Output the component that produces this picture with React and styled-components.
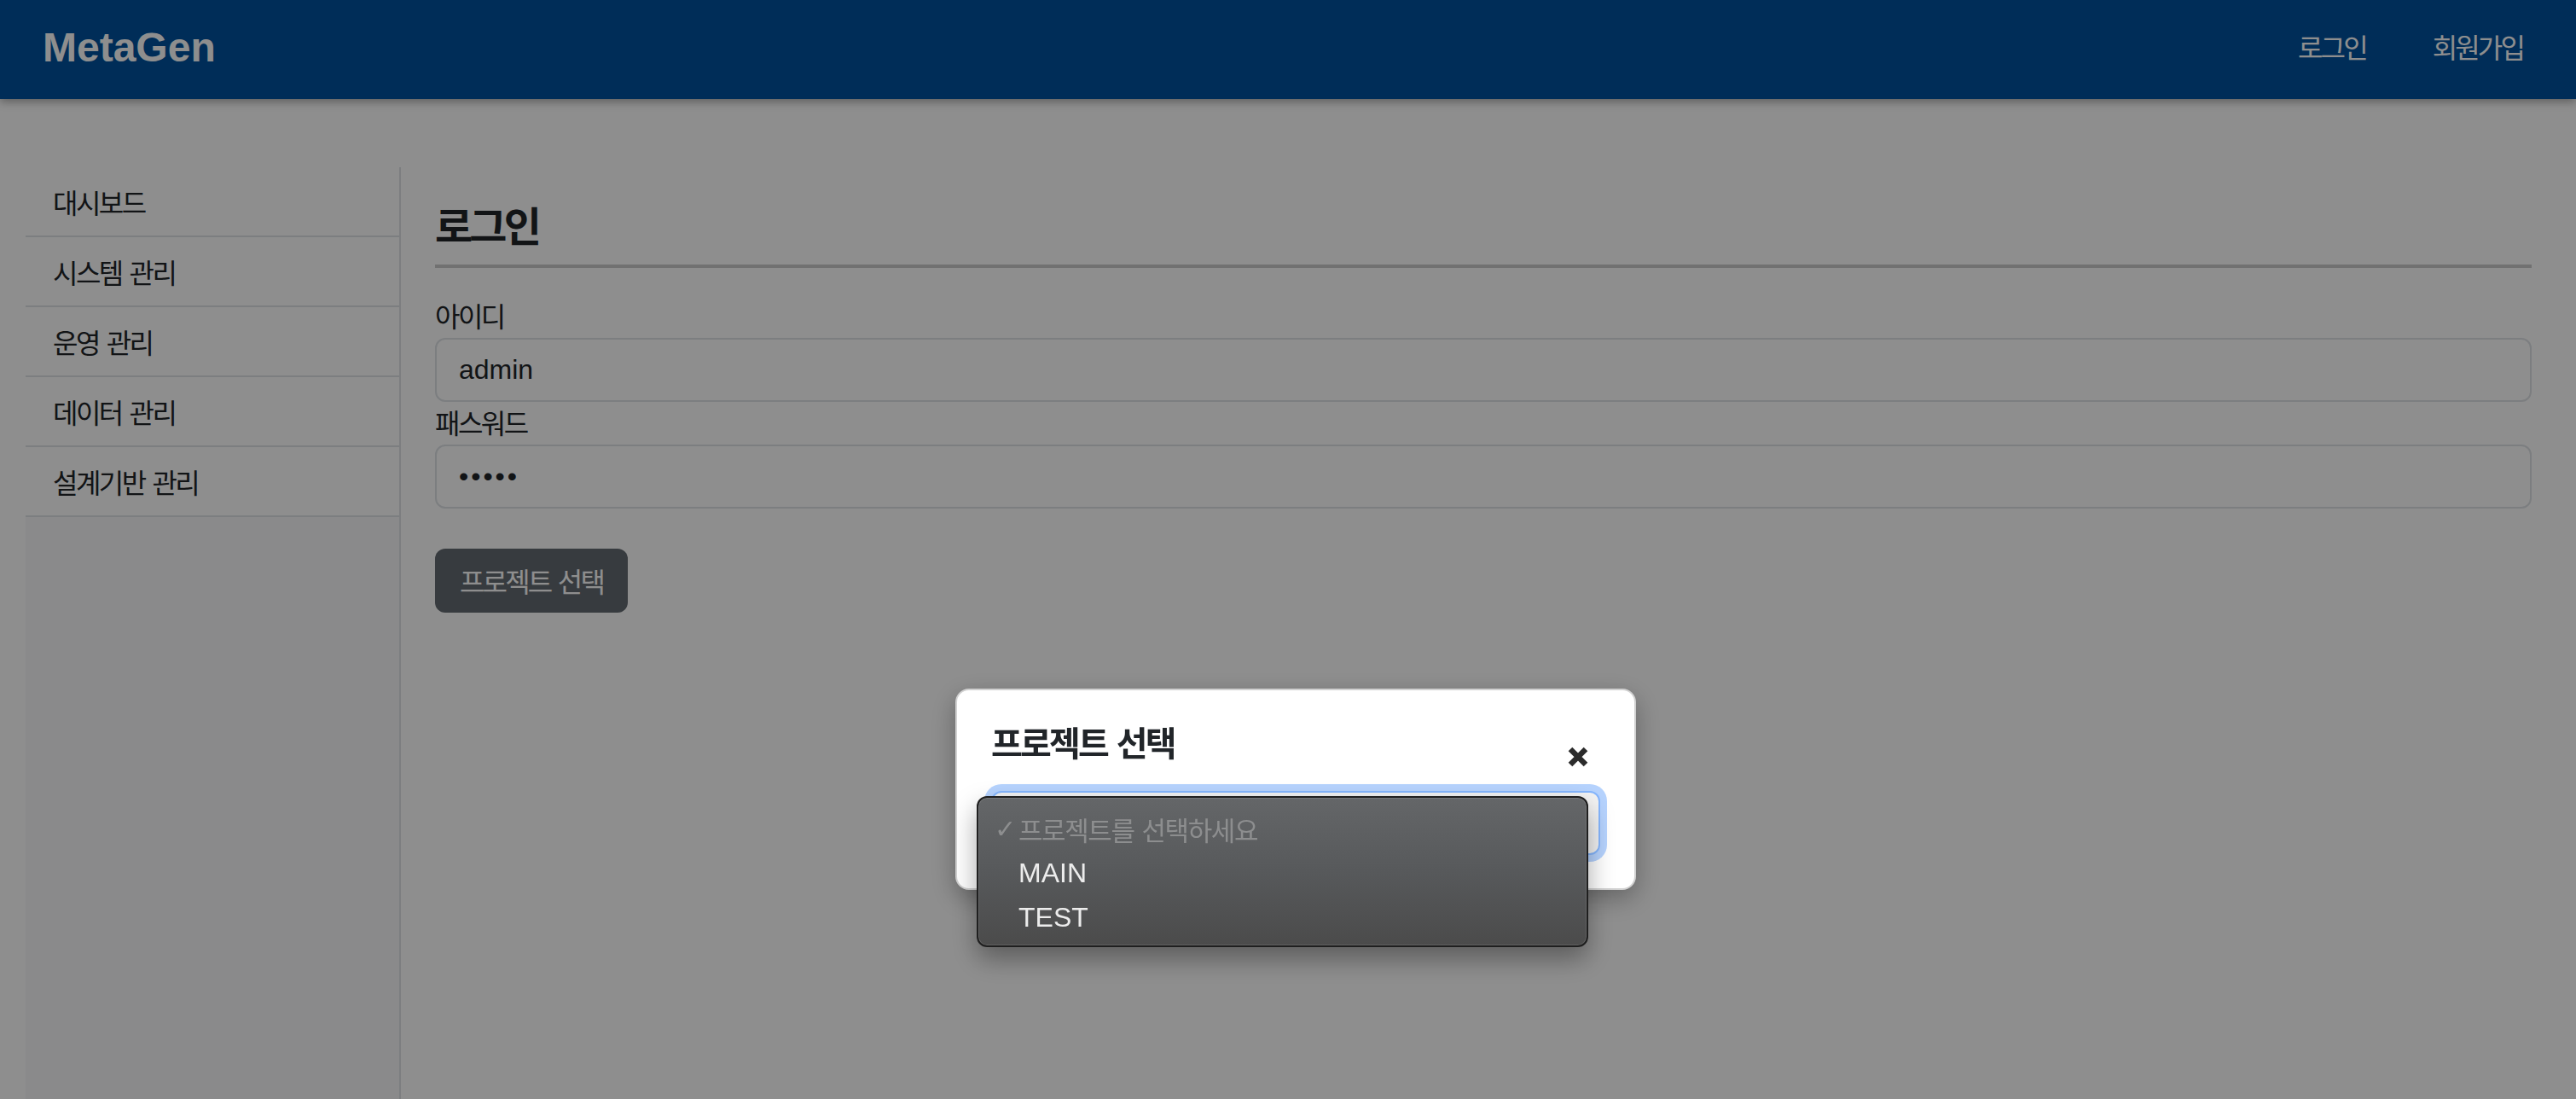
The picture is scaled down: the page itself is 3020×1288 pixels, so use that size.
import React from "react";
import styled, { createGlobalStyle } from "styled-components";

const GlobalStyle = createGlobalStyle`
	* {
		box-sizing: border-box;
	}
	html,
	body {
		margin: 0;
		padding: 0;
		background: #ffffff;
	}
	body {
		font-family: "Liberation Sans", "Noto Sans CJK KR", sans-serif;
		color: #212529;
	}
`;

const menuItems = ["대시보드", "시스템 관리", "운영 관리", "데이터 관리", "설계기반 관리"];
const projects = ["MAIN", "TEST"];

export default function App() {
	return (
		<>
			<GlobalStyle />
			<Page>
				<Navbar>
					<Brand>MetaGen</Brand>
					<NavLinks>
						<NavLink>로그인</NavLink>
						<NavLink>회원가입</NavLink>
					</NavLinks>
				</Navbar>
				<Body>
					<Sidebar>
						{menuItems.map((item) => (
							<SideItem key={item}>{item}</SideItem>
						))}
					</Sidebar>
					<Content>
						<Heading>로그인</Heading>
						<Field>
							<Label>아이디</Label>
							<Input type="text" value="admin" readOnly />
						</Field>
						<Field>
							<Label>패스워드</Label>
							<Input type="password" value="admin" readOnly />
						</Field>
						<DarkButton>프로젝트 선택</DarkButton>
					</Content>
				</Body>
			</Page>

			<Backdrop>
				<Modal>
					<ModalHeader>
						<ModalTitle>프로젝트 선택</ModalTitle>
						<CloseButton title="닫기">
							<svg width="24" height="24" viewBox="0 0 24 24">
								<path
									d="M3 3 L21 21 M21 3 L3 21"
									stroke="#2b2b2b"
									strokeWidth="6.5"
									strokeLinecap="butt"
								/>
							</svg>
						</CloseButton>
					</ModalHeader>
					<SelectBox>
						<Listbox>
							<OptionRow $disabled>
								<Check>✓</Check>
								<OptionText $korean>프로젝트를 선택하세요</OptionText>
							</OptionRow>
							{projects.map((p) => (
								<OptionRow key={p}>
									<Check />
									<OptionText>{p}</OptionText>
								</OptionRow>
							))}
						</Listbox>
					</SelectBox>
				</Modal>
			</Backdrop>
		</>
	);
}

const Page = styled.div`
	min-height: 100vh;
	display: flex;
	flex-direction: column;
`;

const Navbar = styled.header`
	height: 116px;
	background-color: #00529f;
	display: flex;
	align-items: center;
	justify-content: space-between;
	padding: 0 62px 0 50px;
	box-shadow: 0 3px 10px rgba(0, 0, 0, 0.35);
	position: relative;
	z-index: 1;
`;

const Brand = styled.div`
	color: #ffffff;
	font-family: "Liberation Sans", sans-serif;
	font-weight: 700;
	font-size: 48px;
	margin-top: -6px;
`;

const NavLinks = styled.nav`
	display: flex;
	gap: 78px;
	margin-top: -8px;
`;

const NavLink = styled.a`
	color: #ffffff;
	font-size: 32px;
	letter-spacing: -0.09em;
	cursor: pointer;
`;

const Body = styled.main`
	flex: 1;
	display: flex;
	gap: 40px;
	padding: 80px 52px 0 30px;
`;

const Sidebar = styled.aside`
	width: 440px;
	flex-shrink: 0;
	background-color: #f8f8f9;
	border-right: 2px solid #dee2e6;
	display: flex;
	flex-direction: column;
`;

const SideItem = styled.div`
	height: 82px;
	display: flex;
	align-items: center;
	padding-left: 32px;
	background: #ffffff;
	border-bottom: 2px solid #dee2e6;
	font-size: 32px;
	letter-spacing: -0.08em;
	word-spacing: 0.08em;
	color: #212529;
`;

const Content = styled.section`
	flex: 1;
	padding-top: 42px;
	display: flex;
	flex-direction: column;
	align-items: flex-start;
`;

const Heading = styled.h2`
	align-self: stretch;
	margin: 0 0 34px;
	padding-bottom: 14px;
	font-size: 48px;
	font-weight: 700;
	letter-spacing: -0.08em;
	line-height: 1.2;
	border-bottom: 4px solid #cccccc;
`;

const Field = styled.div`
	align-self: stretch;
	display: flex;
	flex-direction: column;
	margin-bottom: 2px;
`;

const Label = styled.label`
	font-size: 32px;
	line-height: 48px;
	letter-spacing: -0.08em;
`;

const Input = styled.input`
	width: 100%;
	height: 75px;
	padding: 0 26px;
	font-family: "Liberation Sans", sans-serif;
	font-size: 32px;
	color: #212529;
	background: #ffffff;
	border: 2px solid #dee2e6;
	border-radius: 12px;
	outline: none;

	&[type="password"] {
		letter-spacing: 3px;
	}
`;

const DarkButton = styled.button`
	margin-top: 45px;
	height: 75px;
	width: 226px;
	padding: 0;
	font-family: "Liberation Sans", "Noto Sans CJK KR", sans-serif;
	font-size: 32px;
	letter-spacing: -0.09em;
	word-spacing: 0.08em;
	color: #ffffff;
	background: #636a71;
	border: none;
	border-radius: 12px;
`;

const Backdrop = styled.div`
	position: fixed;
	inset: 0;
	background: rgba(0, 0, 0, 0.443);
	display: flex;
	justify-content: center;
	align-items: flex-start;
	padding: 807px 0 0 18px;
	z-index: 10;
`;

const Modal = styled.div`
	width: 798px;
	background: #ffffff;
	border: 2px solid rgba(0, 0, 0, 0.18);
	border-radius: 16px;
	padding: 39px 40px 39px;
	box-shadow: 0 10px 30px rgba(0, 0, 0, 0.3);
	display: flex;
	flex-direction: column;
	gap: 31px;
`;

const ModalHeader = styled.div`
	display: flex;
	justify-content: space-between;
	align-items: flex-start;
	height: 48px;
`;

const ModalTitle = styled.h5`
	margin: 0;
	font-size: 40px;
	font-weight: 700;
	line-height: 48px;
	letter-spacing: -0.07em;
	word-spacing: 0.06em;
	color: #212529;
`;

const CloseButton = styled.button`
	margin: 27px 14px 0 0;
	padding: 0;
	border: none;
	background: none;
	width: 24px;
	height: 24px;
	display: flex;
`;

const SelectBox = styled.div`
	position: relative;
	height: 75px;
	background: #f3f3f3;
	border: 2px solid #86b7fe;
	border-radius: 12px;
	box-shadow: 0 0 0 8px rgba(13, 110, 253, 0.3);
`;

const Listbox = styled.ul`
	position: absolute;
	left: -19px;
	top: 4px;
	width: 717px;
	height: 177px;
	margin: 0;
	padding: 10px 0 0;
	list-style: none;
	border-radius: 12px;
	border: 2px solid #1f1f1f;
	background: linear-gradient(180deg, #646668 0%, #57595b 50%, #4b4b4b 100%);
	box-shadow: inset 0 0 0 1px rgba(255, 255, 255, 0.12), 0 14px 30px rgba(0, 0, 0, 0.35);
	z-index: 2;
`;

const OptionRow = styled.li`
	height: 52px;
	display: flex;
	align-items: center;
	padding-left: 19px;
	color: ${(p) => (p.$disabled ? "#8d8e8f" : "#ececec")};
`;

const Check = styled.span`
	width: 28px;
	font-family: "DejaVu Sans", sans-serif;
	font-size: 30px;
`;

const OptionText = styled.span`
	font-size: ${(p) => (p.$korean ? "31px" : "32px")};
	letter-spacing: ${(p) => (p.$korean ? "-0.045em" : "0")};
	word-spacing: ${(p) => (p.$korean ? "0.05em" : "0")};
`;
